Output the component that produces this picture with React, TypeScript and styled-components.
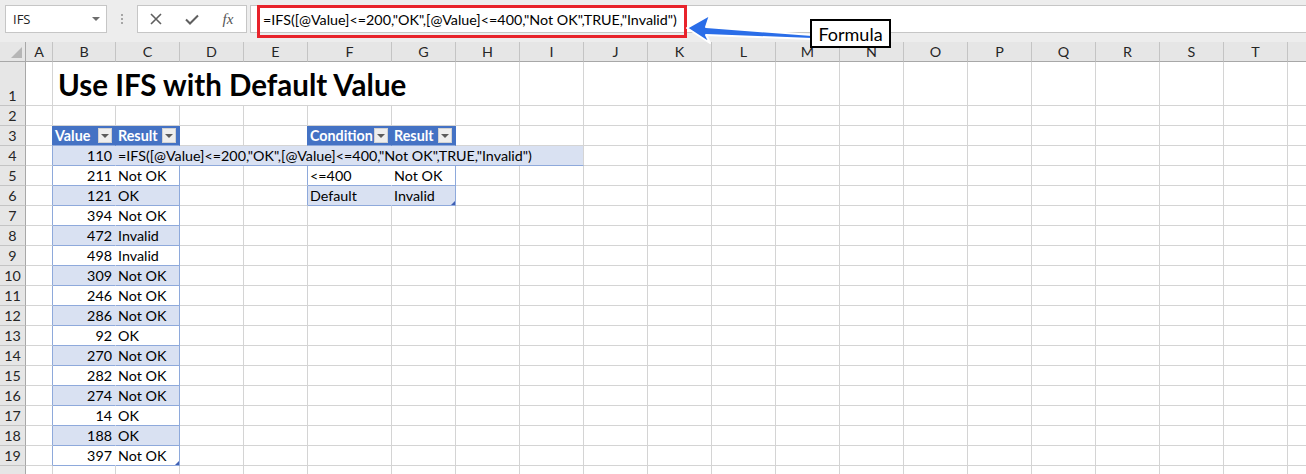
import React from 'react';
import styled, { createGlobalStyle } from 'styled-components';

const CELL_FONT = `Lato, "Noto Sans", sans-serif`;
const UI_FONT = `"Open Sans", "Noto Sans", sans-serif`;
const CELL_SIZE = '14.3px';

const BAND = '#d9e1f2';
const HEAD = '#4472c4';
const TB = '#8ea9db';
const GRID = '#d4d4d4';
const HDR_BG = '#e6e6e6';

const COLS = ['A', 'B', 'C', 'D', 'E', 'F', 'G', 'H', 'I', 'J', 'K', 'L', 'M', 'N', 'O', 'P', 'Q', 'R', 'S', 'T', 'U'];
const COL_W = [27, 63, 64, 64, 64, 84, 64, 64, 64, 64, 64, 64, 64, 64, 64, 64, 64, 64, 64, 64, 64];
const VISIBLE_COLS = 20; // U lies beyond the window edge

const FORMULA = '=IFS([@Value]<=200,"OK",[@Value]<=400,"Not OK",TRUE,"Invalid")';

const GlobalStyle = createGlobalStyle`
  html, body { margin: 0; padding: 0; background: #ffffff; }
  body { overflow: hidden; }
  *, *::before, *::after { box-sizing: border-box; }
`;

const Page = styled.div`
  position: relative;
  width: 1306px;
  height: 474px;
  overflow: hidden;
  background: #ffffff;
  font-family: ${CELL_FONT};
  color: #000;
`;

const TopBar = styled.div`
  height: 42px;
  background: #ededed;
  display: flex;
  align-items: flex-start;
  padding: 5px 0 0 5px;
`;

const NameBox = styled.div`
  width: 102px;
  height: 28px;
  background: #fff;
  border: 1px solid #c6c6c6;
  display: flex;
  align-items: center;
  padding: 0 6px 0 7px;
  font-family: ${UI_FONT};
  font-size: 13px;
  color: #222;
`;

const NameText = styled.span`
  flex: 1;
`;

const DropCaret = styled.span`
  width: 0;
  height: 0;
  border-left: 4px solid transparent;
  border-right: 4px solid transparent;
  border-top: 4px solid #6d6d6d;
`;

const Grip = styled.div`
  width: 30px;
  height: 28px;
  display: flex;
  flex-direction: column;
  align-items: center;
  justify-content: center;
  gap: 2px;
`;

const GripDot = styled.span`
  width: 2px;
  height: 2px;
  background: #a6a6a6;
`;

const FxBox = styled.div`
  width: 110px;
  height: 28px;
  background: #fff;
  border: 1px solid #c6c6c6;
  display: grid;
  grid-template-columns: repeat(3, 1fr);
  align-items: center;
  justify-items: center;
`;

const FxText = styled.span`
  font-family: "Liberation Serif", serif;
  font-style: italic;
  font-size: 15px;
  color: #555;
`;

const FormulaInput = styled.div`
  flex: 1;
  height: 28px;
  margin-left: 3px;
  background: #fff;
  border: 1px solid #c6c6c6;
  border-right: none;
  display: flex;
  align-items: center;
  padding-left: 12px;
  font-size: ${CELL_SIZE};
  white-space: nowrap;
`;

const Sheet = styled.div`
  display: grid;
  grid-template-columns: 26px ${COL_W.map((w) => `${w}px`).join(' ')};
  grid-template-rows: 20px 44px repeat(19, 20px);
  font-size: ${CELL_SIZE};
`;

const Corner = styled.div`
  position: relative;
  background: ${HDR_BG};
  border-right: 1px solid #a8a8a8;
  border-bottom: 1px solid #a8a8a8;
  &::after {
    content: '';
    position: absolute;
    right: 3px;
    bottom: 3px;
    border-left: 11px solid transparent;
    border-bottom: 11px solid #b6b6b6;
  }
`;

const ColHead = styled.div`
  background: ${HDR_BG};
  border-right: 1px solid #c4c4c4;
  border-bottom: 1px solid #a8a8a8;
  display: flex;
  align-items: center;
  justify-content: center;
  color: #262626;
`;

const RowHead = styled.div`
  background: ${HDR_BG};
  border-right: 1px solid #a8a8a8;
  border-bottom: 1px solid #c4c4c4;
  display: flex;
  align-items: flex-end;
  justify-content: center;
  line-height: 19px;
  color: #262626;
`;

type CellProps = {
  $bg: string;
  $br: string;
  $bb: string;
  $align: 'left' | 'right';
  $span: number;
  $head?: boolean;
  $handle?: boolean;
};

const Cell = styled.div<CellProps>`
  position: relative;
  grid-column: span ${(p) => p.$span};
  background: ${(p) => p.$bg};
  border-right: 1px solid ${(p) => p.$br};
  border-bottom: 1px solid ${(p) => p.$bb};
  display: flex;
  align-items: ${(p) => (p.$head ? 'center' : 'flex-end')};
  justify-content: ${(p) => (p.$align === 'right' ? 'flex-end' : 'space-between')};
  padding: 0 3px 0 2px;
  line-height: 19px;
  white-space: nowrap;
  color: ${(p) => (p.$head ? '#ffffff' : '#000000')};
  font-weight: ${(p) => (p.$head ? 700 : 400)};
  &::after {
    content: '';
    display: ${(p) => (p.$handle ? 'block' : 'none')};
    position: absolute;
    right: 0;
    bottom: 0;
    border-left: 4px solid transparent;
    border-bottom: 4px solid #3f5fb4;
  }
`;

const Title = styled(Cell)`
  font-size: 29.5px;
  font-weight: 700;
  line-height: 40px;
  padding-left: 5px;
  z-index: 1;
`;

const FilterBtn = styled.span`
  width: 14px;
  height: 15px;
  background: #eeeeee;
  border: 1px solid #d2d2d2;
  display: flex;
  align-items: center;
  justify-content: center;
  &::before {
    content: '';
    border-left: 4px solid transparent;
    border-right: 4px solid transparent;
    border-top: 4px solid #5c5c5c;
  }
`;

const Overlay = styled.svg`
  position: absolute;
  left: 0;
  top: 0;
  pointer-events: none;
`;

const RedFrame = styled.div`
  position: absolute;
  left: 257px;
  top: 5px;
  width: 430px;
  height: 33px;
  border: 3px solid #e8232b;
  pointer-events: none;
`;

const Callout = styled.div`
  position: absolute;
  left: 810px;
  top: 19px;
  width: 81px;
  height: 29px;
  border: 2px solid #000;
  background: #fff;
  display: flex;
  align-items: center;
  justify-content: center;
  font-size: 18px;
  color: #000;
`;

type Table = { c0: number; c1: number; r0: number; r1: number; handle: [number, number] };
const TABLES: Table[] = [
  { c0: 1, c1: 2, r0: 3, r1: 19, handle: [19, 2] },
  { c0: 5, c1: 6, r0: 3, r1: 6, handle: [6, 6] },
];

const TABLE1: [number, string][] = [
  [110, ''],
  [211, 'Not OK'],
  [121, 'OK'],
  [394, 'Not OK'],
  [472, 'Invalid'],
  [498, 'Invalid'],
  [309, 'Not OK'],
  [246, 'Not OK'],
  [286, 'Not OK'],
  [92, 'OK'],
  [270, 'Not OK'],
  [282, 'Not OK'],
  [274, 'Not OK'],
  [14, 'OK'],
  [188, 'OK'],
  [397, 'Not OK'],
];

const TEXT: Record<string, string> = {
  B3: 'Value',
  C3: 'Result',
  F3: 'Condition',
  G3: 'Result',
  F5: '<=400',
  G5: 'Not OK',
  F6: 'Default',
  G6: 'Invalid',
};
TABLE1.forEach(([v, res], i) => {
  TEXT[`B${i + 4}`] = String(v);
  if (res) TEXT[`C${i + 4}`] = res;
});

const XIcon = () => (
  <svg width="12" height="12" viewBox="0 0 12 12">
    <path d="M1 1 L11 11 M11 1 L1 11" stroke="#5f5f5f" strokeWidth="1.6" fill="none" />
  </svg>
);

const CheckIcon = () => (
  <svg width="14" height="11" viewBox="0 0 14 11">
    <path d="M1 5.5 L5 9.5 L13 1.5" stroke="#5f5f5f" strokeWidth="2" fill="none" />
  </svg>
);

function renderCell(r: number, c: number): React.ReactNode {
  const key = `${COLS[c]}${r}`;
  if (r === 1 && c >= 2 && c <= 6) return null;
  if (r === 4 && c >= 3 && c <= 8) return null;

  if (r === 1 && c === 1) {
    return (
      <Title key={key} $bg="transparent" $br={GRID} $bb={GRID} $align="left" $span={6}>
        Use IFS with Default Value
      </Title>
    );
  }
  if (r === 4 && c === 2) {
    return (
      <Cell key={key} $bg={BAND} $br={GRID} $bb={TB} $align="left" $span={7}>
        {FORMULA}
      </Cell>
    );
  }

  let bg = 'transparent';
  let br = GRID;
  let bb = GRID;
  let head = false;
  let handle = false;
  const t = TABLES.find((tb) => r >= tb.r0 && r <= tb.r1 && c >= tb.c0 && c <= tb.c1);
  if (t) {
    if (r === t.r0) {
      head = true;
      bg = HEAD;
      br = HEAD;
      bb = TB;
    } else {
      bg = (r - t.r0) % 2 === 1 ? BAND : '#ffffff';
      br = c === t.c1 ? TB : bg;
      bb = TB;
      handle = t.handle[0] === r && t.handle[1] === c;
    }
  } else {
    const left = TABLES.find((tb) => c === tb.c0 - 1 && r >= tb.r0 && r <= tb.r1);
    if (left) br = r === left.r0 ? HEAD : TB;
  }
  const text = TEXT[key];
  const numeric = text !== undefined && /^\d+$/.test(text);
  return (
    <Cell
      key={key}
      $bg={bg}
      $br={br}
      $bb={bb}
      $align={numeric ? 'right' : 'left'}
      $span={1}
      $head={head}
      $handle={handle}
    >
      {text}
      {head && <FilterBtn />}
    </Cell>
  );
}

export default function App() {
  const rows: React.ReactNode[] = [];
  for (let r = 1; r <= 20; r++) {
    rows.push(<RowHead key={`rh${r}`}>{r < 20 ? r : ''}</RowHead>);
    for (let c = 0; c < COLS.length; c++) rows.push(renderCell(r, c));
  }
  return (
    <Page>
      <GlobalStyle />
      <TopBar>
        <NameBox>
          <NameText>IFS</NameText>
          <DropCaret />
        </NameBox>
        <Grip>
          <GripDot />
          <GripDot />
          <GripDot />
        </Grip>
        <FxBox>
          <XIcon />
          <CheckIcon />
          <FxText>fx</FxText>
        </FxBox>
        <FormulaInput>{FORMULA}</FormulaInput>
      </TopBar>
      <Sheet>
        <Corner />
        {COLS.map((col, i) => (
          <ColHead key={col}>{i < VISIBLE_COLS ? col : ''}</ColHead>
        ))}
        {rows}
      </Sheet>
      <RedFrame />
      <Overlay width="1306" height="70">
        <polygon
          points="687,28 710,15 706,27 812,35 812,39 706,35 710,43"
          fill="#2a6de8"
          stroke="#ffffff"
          strokeWidth="2"
          strokeLinejoin="round"
        />
      </Overlay>
      <Callout>Formula</Callout>
    </Page>
  );
}
